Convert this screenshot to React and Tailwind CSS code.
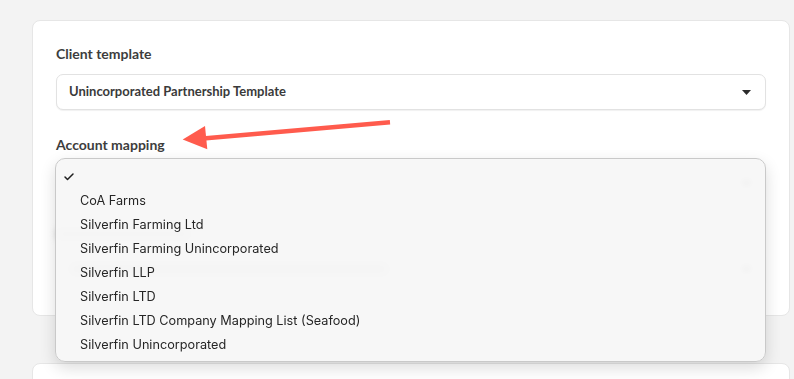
import { Check } from 'lucide-react';

const mappings = [
  'CoA Farms',
  'Silverfin Farming Ltd',
  'Silverfin Farming Unincorporated',
  'Silverfin LLP',
  'Silverfin LTD',
  'Silverfin LTD Company Mapping List (Seafood)',
  'Silverfin Unincorporated',
];

function Caret() {
  return (
    <svg width="9" height="5" viewBox="0 0 9 5" className="shrink-0">
      <path d="M0 0h9L4.5 5z" fill="#2b2b2b" />
    </svg>
  );
}

function SelectBox({ children }) {
  return (
    <div className="h-9 flex items-center justify-between pl-3 pr-[14px] rounded-[7px] border border-[#e2e2e2] bg-white shadow-[0_1px_1px_rgba(0,0,0,0.06)]">
      {children}
      <Caret />
    </div>
  );
}

export default function App() {
  return (
    <div className="relative w-[794px] h-[379px] overflow-hidden bg-[#f3f3f3] font-['Lato',sans-serif]">
      <div className="pt-5 pl-8 pr-1">
        <div className="relative rounded-lg border border-[#e6e6e6] bg-white px-[23px] pt-[23px] pb-7">
          <p className="text-[14px] leading-5 font-bold text-[#3d3d3d]">Client template</p>
          <div className="mt-[10px]">
            <SelectBox>
              <span className="text-[13px] font-bold text-[#3a3a3a]">Unincorporated Partnership Template</span>
            </SelectBox>
          </div>

          <p className="mt-[25px] text-[14px] leading-5 font-bold text-[#3d3d3d]">Account mapping</p>
          <div className="mt-[10px]">
            <SelectBox>
              <span />
            </SelectBox>
          </div>

          {/* hidden under the open menu, only seen blurred */}
          <div className="mt-[27px] h-3 w-[135px] rounded bg-[#d6d6d6] blur-[3px]" />
          <div className="mt-[11px]">
            <SelectBox>
              <span className="h-3 w-[320px] rounded bg-[#d0d0d0] blur-[3px]" />
            </SelectBox>
          </div>

          {/* open native menu */}
          <div className="absolute left-[22px] right-[23px] top-[137px] rounded-[10px] border border-[#c9c9c9] bg-[#f6f6f6]/[0.94] backdrop-blur-[3px] shadow-[0_6px_16px_rgba(0,0,0,0.14)] py-[5px] font-['Inter',sans-serif]">
            <div className="h-6 flex items-center pl-[7px] pt-[2px]">
              <Check size={12} strokeWidth={3} className="text-[#1f1f1f]" />
            </div>
            {mappings.map(name => (
              <div key={name} className="h-6 flex items-center pl-6 pt-[1px] text-[12.7px] text-[#262626]">
                {name}
              </div>
            ))}
          </div>
        </div>

        <div className="mt-[47px] h-10 rounded-lg border border-[#e6e6e6] bg-white" />
      </div>

      <svg className="absolute left-[175px] top-[115px]" width="220" height="40" viewBox="0 0 220 40">
        <line x1="215" y1="7.3" x2="28" y2="23.5" stroke="#ff5b4d" strokeWidth="4.5" />
        <polygon points="7.7,24.6 30,11 32.3,34.3" fill="#ff5b4d" />
      </svg>
    </div>
  );
}
